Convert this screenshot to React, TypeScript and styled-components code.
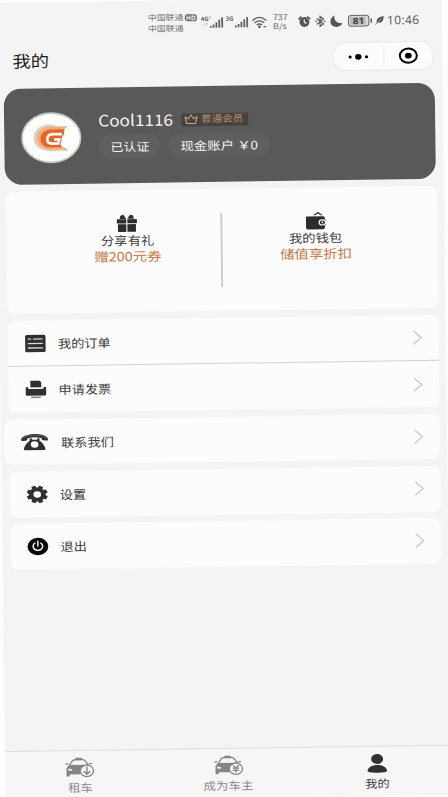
import React from 'react';
import styled, { createGlobalStyle } from 'styled-components';

const GlobalStyle = createGlobalStyle`
  * { box-sizing: border-box; }
  body { margin: 0; background: #fdfdfd; }
  svg { display: block; flex: none; overflow: visible; }
`;

const Viewport = styled.div`
  width: 448px;
  height: 797px;
  overflow: hidden;
  background: #fdfdfd;
  font-family: 'Noto Sans CJK SC', 'Noto Sans', sans-serif;
`;

const Screen = styled.main`
  display: flex;
  flex-direction: column;
  width: 446px;
  height: 798px;
  background: #f4f4f4;
  transform-origin: 0 0;
  transform: matrix(1, -0.0142, 0.0125, 1, -4.4, 3);
`;

/* Text whose glyphs are slightly wider than tall. */
const Wide = styled.span<{ $size: number; $color?: string; $origin?: string; $stretch?: number; $weight?: number }>`
  display: block;
  flex: none;
  white-space: nowrap;
  font-size: ${(p) => p.$size}px;
  line-height: 1;
  font-weight: ${(p) => p.$weight ?? 400};
  color: ${(p) => p.$color ?? '#3c3c3c'};
  transform: scaleX(${(p) => p.$stretch ?? 1.11});
  transform-origin: ${(p) => p.$origin ?? 'left'} center;
`;

const StatusBar = styled.header`
  display: flex;
  align-items: center;
  height: 45px;
  padding-left: 152px;
  color: #606060;
`;

const StatusItem = styled.div<{ $w: number; $gap?: number; $lift?: number }>`
  flex: none;
  width: ${(p) => p.$w}px;
  margin-left: ${(p) => p.$gap ?? 0}px;
  margin-bottom: ${(p) => p.$lift ?? 0}px;
`;

const Carriers = styled(StatusItem)`
  display: grid;
  gap: 3px;
`;

const HdTag = styled(StatusItem)`
  height: 7px;
  border-radius: 2.5px;
  background: #666;
  color: #f4f4f4;
  font: 700 6.5px/7px 'Noto Sans', sans-serif;
  text-align: center;
`;

const Speed = styled(StatusItem)`
  display: grid;
  justify-items: center;
  gap: 1.5px;
`;

const Clock = styled(StatusItem)`
  font: 400 12px/14px 'Noto Sans', sans-serif;
  letter-spacing: 0.4px;
`;

const TitleBar = styled.div`
  display: flex;
  align-items: center;
  justify-content: space-between;
  height: 27px;
  padding: 0 8px 0 16px;
`;

const Capsule = styled.div`
  display: flex;
  align-items: center;
  width: 102px;
  height: 29px;
  border: 1px solid #e9e9e9;
  border-radius: 15px;
  background: #fcfcfc;
`;

const CapsuleHalf = styled.div`
  display: flex;
  flex: 1;
  align-items: center;
  justify-content: center;
  & + & { border-left: 1px solid #efefef; height: 19px; }
`;

const Profile = styled.section`
  display: flex;
  align-items: center;
  gap: 17px;
  width: 431px;
  height: 96px;
  margin: 13.5px 0 0 7.3px;
  padding: 4px 0 0 17px;
  border-radius: 17px;
  background: #595959;
`;

const ProfileInfo = styled.div`
  display: grid;
  gap: 5px;
  margin-top: -4px;
`;

const NameLine = styled.div`
  display: flex;
  align-items: center;
  height: 18px;
`;

const UserName = styled.div`
  width: 83px;
`;

const MemberBadge = styled.div`
  display: flex;
  align-items: center;
  gap: 3px;
  width: 67px;
  height: 13px;
  padding-left: 3px;
  background: #474340;
`;

const Pills = styled.div`
  display: flex;
  gap: 8px;
`;

const Pill = styled.div<{ $w: number }>`
  display: flex;
  align-items: center;
  justify-content: center;
  width: ${(p) => p.$w}px;
  height: 24px;
  border-radius: 12px;
  background: #5f5f5f;
`;

const Promo = styled.section`
  display: flex;
  justify-content: center;
  width: 431px;
  height: 122px;
  margin: 7.5px 0 0 7.5px;
  padding-top: 24px;
  border-radius: 8px;
  background: #fcfcfc;
`;

const PromoItem = styled.div`
  display: flex;
  flex-direction: column;
  align-items: center;
  width: 187px;
  & > span { margin-top: 1.5px; }
  & > span + span { margin-top: 4.8px; }
`;

const PromoDivider = styled.div`
  width: 1.2px;
  height: 74px;
  background: #cdcdcd;
`;

const Group = styled.section<{ $left: number; $gap: number }>`
  width: ${(p) => 439 - p.$left}px;
  margin: ${(p) => p.$gap}px 0 0 ${(p) => p.$left}px;
  border-radius: 8px;
  background: #fcfcfc;
`;

const Row = styled.div<{ $indent: number }>`
  display: flex;
  align-items: center;
  height: 45.7px;
  padding: 0 17px 0 ${(p) => p.$indent}px;
  & + & { border-top: 1.3px solid #d2d2d2; height: 46.3px; }
`;

const IconCell = styled.div<{ $w: number }>`
  width: ${(p) => p.$w}px;
`;

const RowLabel = styled.div`
  flex: 1;
`;

const TabBar = styled.nav`
  display: grid;
  grid-template-columns: repeat(3, 1fr);
  height: 50px;
  margin-top: auto;
  border-top: 1px solid #dedede;
  background: #f6f6f6;
`;

const Tab = styled.div`
  display: flex;
  flex-direction: column;
  align-items: center;
  padding-left: 1px;
`;

const TabIcon = styled.div`
  display: flex;
  align-items: center;
  height: 30.5px;
  padding-top: 4px;
`;

const Signal = ({ tag, sub }: { tag: string; sub?: boolean }) => (
  <svg width="23" height="13" viewBox="0 0 23 13" fill="currentColor">
    <text x="0" y="5" fontSize="6" fontWeight="700" fontFamily="Noto Sans">{tag}</text>
    {sub && <path d="M4 6.5v3M3 8.5l1 1 1-1M6 9.5v-3M5 7.5l1-1 1 1" fill="none" stroke="#bbb" strokeWidth=".6" />}
    <path d="M9 10h1.7v1.8H9zM11.7 8.5h1.8v3.3h-1.8zM14.6 6.3h1.8v5.5h-1.8zM17.5 3.8h1.8v8h-1.8zM20.4 1.5h1.8v10.3h-1.8z" />
  </svg>
);

const Wifi = () => (
  <svg width="15" height="12" viewBox="0 0 15 12" fill="none" stroke="currentColor" strokeWidth="1.3">
    <path d="M.5 4.3Q7.5-2 14.5 4.3M2.7 6.6q4.8-4 9.6 0M4.8 8.8q2.7-2.2 5.4 0" />
    <circle cx="7.5" cy="10.6" r=".7" fill="currentColor" />
    <path d="M11.5 10.4h2.8" strokeWidth="1.2" />
  </svg>
);

const Alarm = () => (
  <svg width="13" height="12" viewBox="0 0 13 12">
    <circle cx="6.5" cy="6.4" r="4.9" fill="#555" />
    <path d="M.7 3.6 3.6.9M12.3 3.6 9.4.9" stroke="#555" strokeWidth="1.6" />
    <path d="M6.4 3.6v3.1l2.2 1.3" fill="none" stroke="#f4f4f4" strokeWidth="1.1" />
  </svg>
);

const Bluetooth = () => (
  <svg width="11" height="12" viewBox="0 0 11 12" fill="none" stroke="#555" strokeWidth="1.2">
    <path d="M1.8 3 8.6 8.4 5.2 11V1l3.4 2.6L1.8 9" />
    <path d="M.3 6h1.5M9 6h1.6" />
  </svg>
);

const Moon = () => (
  <svg width="13" height="12" viewBox="0 0 13 12" fill="#555">
    <path d="M4.6.3C3.7 4.6 6.6 8.7 12.4 8A6.4 5.8 0 0 1 6.6 11.8C-.8 11.8-1.4 3 4.6.3z" />
  </svg>
);

const Battery = () => (
  <svg width="25" height="12" viewBox="0 0 25 12">
    <rect x=".6" y=".6" width="20.4" height="10.6" rx="2.8" fill="#dcdcdc" stroke="#666" />
    <rect x="2.2" y="2" width="15.5" height="7.8" rx="1.2" fill="#b9b9b9" />
    <path d="M23.4 3.8v4.2" stroke="#666" strokeWidth="1.6" />
    <text x="10.6" y="9.2" textAnchor="middle" fontSize="9" fontWeight="700" fontFamily="Noto Sans" fill="#444" textLength="11.5" lengthAdjust="spacingAndGlyphs">81</text>
  </svg>
);

const Leaf = () => (
  <svg width="9" height="9" viewBox="0 0 9 9">
    <path d="M8.7.4C9 5 6.8 7.8 2.2 7.2.6 3.6 3.4 1.4 8.7.4z" fill="#555" />
    <path d="M.4 8.8 6 3.4" stroke="#555" strokeWidth=".9" />
    <path d="M2.4 7 6.6 2.8" stroke="#ddd" strokeWidth=".6" />
  </svg>
);

const Dots = () => (
  <svg width="20" height="6" viewBox="0 0 20 6">
    <circle cx="1.8" cy="3" r="1.6" /><ellipse cx="10" cy="3" rx="3.2" ry="2.8" /><circle cx="18.2" cy="3" r="1.6" />
  </svg>
);

const Target = () => (
  <svg width="20" height="17" viewBox="0 0 20 17">
    <ellipse cx="10" cy="8.5" rx="8.5" ry="7.1" fill="none" stroke="#000" strokeWidth="2" />
    <ellipse cx="10" cy="8.5" rx="3.4" ry="2.9" />
  </svg>
);

const Avatar = () => (
  <svg width="60" height="51" viewBox="0 0 60 51">
    <ellipse cx="30" cy="25.5" rx="29.3" ry="24.6" fill="#fdfdfd" stroke="#c4c4c4" strokeWidth="1.6" />
    <path d="M46.5 14.2 43 17.500V34l3.500 5Q40 38.200 37 38.500 31 39.800 25.500 38.500C17.500 37 12.300 32 12.300 25.700 12.300 18 19 12.300 28 12.300c4.500 0 6.500 1.700 10.500 1.900z" fill="#d8d0c8" />
    <path d="M45.800 14.600 42.500 18V34l3 4.300Q41 37 37 37.200 31.500 38.200 26.500 37C19.500 35.500 15.600 31.300 15.600 26 15.600 19 21.500 14 29 14.200c3.500 0 6 .8 9.500.8z" fill="#f2ae74" />
    <path d="M43.200 17.200H30.500C23.500 17.200 19.200 21.200 19.200 26.600c0 5.400 3.800 8.600 10 8.600H42L40 31.800l2-7.300z" fill="#e8622a" />
    <path d="M44.500 23.500h-3.500l-2 9.300 2.500 2.600h5z" fill="#fdfdfd" />
    <path d="M40.800 22H31.500C28 22 26 24 26 27s1.800 4.300 4.500 4.300h6.300l1-4h-5" fill="none" stroke="#fdfdfd" strokeWidth="2.700" />
  </svg>
);

const Crown = () => (
  <svg width="14" height="10" viewBox="0 0 14 10" fill="none" stroke="#c6a478" strokeWidth="1.1" strokeLinejoin="round">
    <path d="M2.6 9.2h8.8L13 2.6 9.6 4.5 7 .8 4.4 4.5 1 2.6z" />
  </svg>
);

const Gift = () => (
  <svg width="21" height="18" viewBox="0 0 21 18" fill="#2c2c2c">
    <path d="M.5 5h9.4v4.200H.5zM11 5h9.500v4.200H11zM1.500 10h8.400v7.700H1.500zM11 10h8.500v7.700H11zM3.300 4.700 4 1.400 7.200.6 9.800 4.700zM17.500 4.700 16.800 1.400 13.600.6 11 4.700z" />
  </svg>
);

const Wallet = () => (
  <svg width="21" height="18" viewBox="0 0 21 18">
    <path d="M1.5 4.8h16.200q1.800 0 1.800 1.800v9.200q0 2-2 2H2.400q-1.800 0-1.800-2V5.600q0-.8.9-.8z" fill="#2c2c2c" />
    <path d="M7.500 3.800 12.800.3l4.700 3.500h-2.400L12.600 2 10 3.800z" fill="#444" />
    <path d="M16 8.300h4.600v5.400H16a2.700 2.700 0 0 1 0-5.400z" fill="#2c2c2c" />
    <ellipse cx="17" cy="11" rx="3.300" ry="2.600" fill="#2c2c2c" stroke="#fcfcfc" strokeWidth="1.200" />
    <circle cx="17" cy="11" r=".9" fill="#fcfcfc" />
  </svg>
);

const Orders = () => (
  <svg width="21" height="18" viewBox="0 0 21 18">
    <rect x=".3" y=".3" width="20.400" height="17.400" rx="1.600" fill="#303030" />
    <path d="M3 4.500h3.300M8.200 4.500h9.600M3 9h15M3 13.400h15" stroke="#d8d8d8" strokeWidth="1.300" />
  </svg>
);

const Printer = () => (
  <svg width="21" height="18" viewBox="0 0 21 18">
    <path d="M5 .3h9.300l1.600 1.500V7H5zM.3 6.700h2.500V8.300h15.400V6.700h2.500v7.400q0 1-1 1H1.300q-1 0-1-1z" fill="#303030" />
    <path d="M4.200 7.600h12.600" stroke="#fcfcfc" strokeWidth="1" />
    <path d="M5.800 16.800h9.500" stroke="#888" strokeWidth="1.700" />
  </svg>
);

const Phone = () => (
  <svg width="27" height="17" viewBox="0 0 27 17">
    <path d="M.2 4.800C5-1 22-1 26.800 4.800V7q-2.800.6-6-.3V4.900Q13.500 2.400 6.200 4.900v1.800Q3 7.600.2 7z" fill="#303030" />
    <path d="M1.500 4.900Q7 1.300 13.500 1.500t12 3.400" fill="none" stroke="#8b8b8b" strokeWidth=".5" />
    <path d="M8.600 4.800h2.200v1.400h5.400V4.800h2.200v2.400Q23 10.200 24.300 15.400q0 1.300-1.300 1.300H4q-1.300 0-1.300-1.300Q4 10.200 8.600 7.200z" fill="#303030" />
    <ellipse cx="13.500" cy="11" rx="3.800" ry="3.200" fill="#fcfcfc" />
  </svg>
);

const Gear = () => (
  <svg width="21" height="18" viewBox="0 0 21 18">
    <g transform="translate(10.500 9) scale(1.140 .96)">
      <circle r="5.300" fill="none" stroke="#303030" strokeWidth="4" />
      {[0, 45, 90, 135, 180, 225, 270, 315].map((a) => (
        <path key={a} d="M-2.300 -6 L-1.700 -9.200 H1.700 L2.300 -6 z" fill="#303030" transform={`rotate(${a + 22.5})`} />
      ))}
    </g>
  </svg>
);

const Power = () => (
  <svg width="21" height="18" viewBox="0 0 21 18">
    <ellipse cx="10.500" cy="9" rx="10.400" ry="8.800" fill="#080808" />
    <path d="M7.500 5.600a4.800 4.100 0 1 0 6 0M10.500 3.800v4.800" fill="none" stroke="#fff" strokeWidth="1.400" strokeLinecap="round" />
  </svg>
);

const Chevron = () => (
  <svg width="9" height="15" viewBox="0 0 9 15" fill="none" stroke="#c9c9c9" strokeWidth="1.300">
    <path d="M.6.8 8.400 7.500.6 14.200" />
  </svg>
);

const Car = ({ mark }: { mark: 'down' | 'yuan' }) => (
  <svg width="29" height="20" viewBox="0 0 29 20">
    <path d="M4.500 7.200 7.200 2.800Q8 1.800 9.500 1.800h8q1.500 0 2.600 1.200l3.300 4.200M10.500 1.500l.5-1h5l.6 1M.3 5.900h3M24 5.900h3" fill="none" stroke="#858585" strokeWidth="1.300" />
    <path d="M3.800 7h19.600l1.800 3-10.700 6.300H4.500v2H1.300V10z" fill="#858585" />
    <path d="M3 10.500l3.800.8v1.400L3 12.400z" fill="#f6f6f6" />
    <ellipse cx="21.700" cy="13" rx="6.600" ry="5.700" fill="#f6f6f6" stroke="#858585" strokeWidth="1.300" />
    {mark === 'down'
      ? <path d="M21.700 9v7.300M18.500 13.400l3.200 3 3.200-3" fill="none" stroke="#858585" strokeWidth="1.400" />
      : <path d="M18.700 9.300l3 3 3-3M21.700 12v5M18.500 12.400h6.400M18.500 14.600h6.400" fill="none" stroke="#858585" strokeWidth="1.200" />}
  </svg>
);

const Person = () => (
  <svg width="20" height="20" viewBox="0 0 20 20" fill="#303030">
    <ellipse cx="10" cy="5.300" rx="6" ry="5" />
    <path d="M.2 17.200C1 9.300 19 9.300 19.800 17.200q0 1.800-9.800 1.800T.2 17.200z" />
  </svg>
);

type Item = { label: string; icon: React.ReactNode; indent: number; cell: number };
type MenuGroup = { left: number; gap: number; items: Item[] };

const groups: MenuGroup[] = [
  {
    left: 7.5, gap: 6.7, items: [
      { label: '我的订单', icon: <Orders />, indent: 17.5, cell: 32.5 },
      { label: '申请发票', icon: <Printer />, indent: 17.5, cell: 33 },
    ],
  },
  { left: 2.5, gap: 7, items: [{ label: '联系我们', icon: <Phone />, indent: 17.5, cell: 39.5 }] },
  { left: 8, gap: 6.5, items: [{ label: '设置', icon: <Gear />, indent: 17, cell: 33 }] },
  { left: 7.5, gap: 6.3, items: [{ label: '退出', icon: <Power />, indent: 17.5, cell: 33 }] },
];

export default function App() {
  return (
    <Viewport>
      <GlobalStyle />
      <Screen>
        <StatusBar>
          <Carriers $w={36}>
            <Wide $size={8} $color="#777">中国联通</Wide>
            <Wide $size={8} $color="#777">中国联通</Wide>
          </Carriers>
          <HdTag $w={12} $gap={1} $lift={11}>HD</HdTag>
          <StatusItem $w={23} $gap={4}><Signal tag="4G⁺" sub /></StatusItem>
          <StatusItem $w={23} $gap={2}><Signal tag="3G" /></StatusItem>
          <StatusItem $w={15} $gap={3}><Wifi /></StatusItem>
          <Speed $w={16} $gap={5}>
            <Wide $size={7.8} $color="#666" $origin="center" $stretch={1.15}>737</Wide>
            <Wide $size={7.8} $color="#666" $origin="center" $stretch={1.15}>B/s</Wide>
          </Speed>
          <StatusItem $w={13} $gap={10}><Alarm /></StatusItem>
          <StatusItem $w={11} $gap={4}><Bluetooth /></StatusItem>
          <StatusItem $w={13} $gap={4}><Moon /></StatusItem>
          <StatusItem $w={25} $gap={5}><Battery /></StatusItem>
          <StatusItem $w={9} $gap={2}><Leaf /></StatusItem>
          <Clock $w={36} $gap={3}>10:46</Clock>
        </StatusBar>

        <TitleBar>
          <Wide $size={16.5} $color="#1c1c1c">我的</Wide>
          <Capsule>
            <CapsuleHalf><Dots /></CapsuleHalf>
            <CapsuleHalf><Target /></CapsuleHalf>
          </Capsule>
        </TitleBar>

        <Profile>
          <Avatar />
          <ProfileInfo>
            <NameLine>
              <UserName><Wide $size={15.5} $color="#f2f2f2">Cool1116</Wide></UserName>
              <MemberBadge>
                <Crown />
                <Wide $size={9.5} $color="#b39069">普通会员</Wide>
              </MemberBadge>
            </NameLine>
            <Pills>
              <Pill $w={62}><Wide $size={11.7} $color="#f2f2f2" $origin="center">已认证</Wide></Pill>
              <Pill $w={101}><Wide $size={11.7} $color="#f2f2f2" $origin="center" $stretch={1.15}>现金账户 ￥0</Wide></Pill>
            </Pills>
          </ProfileInfo>
        </Profile>

        <Promo>
          <PromoItem>
            <Gift />
            <Wide $size={12} $origin="center">分享有礼</Wide>
            <Wide $size={12.5} $color="#c87845" $origin="center" $stretch={1.15}>赠200元券</Wide>
          </PromoItem>
          <PromoDivider />
          <PromoItem>
            <Wallet />
            <Wide $size={12} $origin="center">我的钱包</Wide>
            <Wide $size={12.5} $color="#c87845" $origin="center" $stretch={1.15}>储值享折扣</Wide>
          </PromoItem>
        </Promo>

        {groups.map((g) => (
          <Group key={g.items[0].label} $left={g.left} $gap={g.gap}>
            {g.items.map((it) => (
              <Row key={it.label} $indent={it.indent}>
                <IconCell $w={it.cell}>{it.icon}</IconCell>
                <RowLabel><Wide as="div" $size={12} $stretch={1.1}>{it.label}</Wide></RowLabel>
                <Chevron />
              </Row>
            ))}
          </Group>
        ))}

        <TabBar>
          <Tab>
            <TabIcon><Car mark="down" /></TabIcon>
            <Wide $size={11} $color="#8a8a8a" $origin="center">租车</Wide>
          </Tab>
          <Tab>
            <TabIcon><Car mark="yuan" /></TabIcon>
            <Wide $size={11} $color="#8a8a8a" $origin="center" $stretch={1.14}>成为车主</Wide>
          </Tab>
          <Tab>
            <TabIcon><Person /></TabIcon>
            <Wide $size={11} $origin="center">我的</Wide>
          </Tab>
        </TabBar>
      </Screen>
    </Viewport>
  );
}
